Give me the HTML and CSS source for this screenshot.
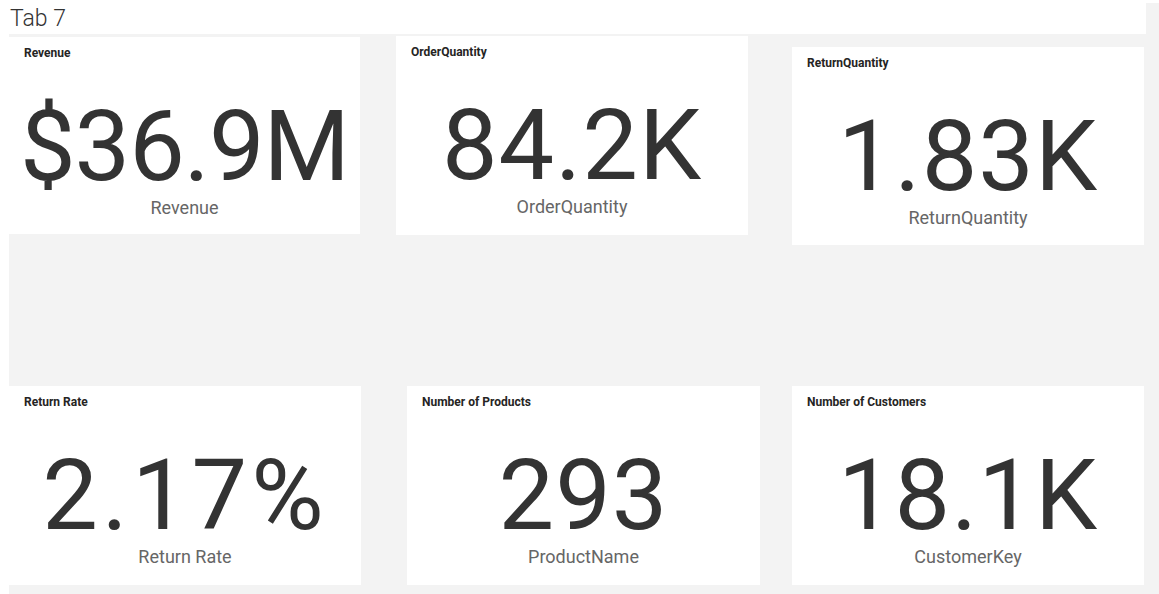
FILE: index.html
```html
<!DOCTYPE html>
<html lang="en">
<head>
<meta charset="utf-8">
<title>Tab 7</title>
<link rel="stylesheet" href="styles.css">
</head>
<body>
<div class="report">
  <header class="page-header"><h1 class="page-title">Tab 7</h1></header>
  <main class="canvas">
    <div class="row row-top">
      <section class="card card-rev">
        <h2 class="card-title">Revenue</h2>
        <div class="kpi kpi-tight">$36.9M</div>
        <div class="kpi-label">Revenue</div>
      </section>
      <section class="card card-oq">
        <h2 class="card-title">OrderQuantity</h2>
        <div class="kpi">84.2K</div>
        <div class="kpi-label">OrderQuantity</div>
      </section>
      <section class="card card-rq">
        <h2 class="card-title">ReturnQuantity</h2>
        <div class="kpi">1.83K</div>
        <div class="kpi-label">ReturnQuantity</div>
      </section>
    </div>
    <div class="row row-bottom">
      <section class="card card-rr">
        <h2 class="card-title">Return Rate</h2>
        <div class="kpi kpi-wide">2.17%</div>
        <div class="kpi-label">Return Rate</div>
      </section>
      <section class="card card-np">
        <h2 class="card-title">Number of Products</h2>
        <div class="kpi">293</div>
        <div class="kpi-label">ProductName</div>
      </section>
      <section class="card card-nc">
        <h2 class="card-title">Number of Customers</h2>
        <div class="kpi">18.1K</div>
        <div class="kpi-label">CustomerKey</div>
      </section>
    </div>
  </main>
</div>
</body>
</html>
```

FILE: styles.css
```css
* { box-sizing: border-box; }

html, body {
  margin: 0;
  padding: 0;
  background: #ffffff;
  font-family: Roboto, "Liberation Sans", sans-serif;
  overflow: hidden;
}

.report {
  margin: 3px 0 0 9px;
  width: 1150px;
  height: 591px;
  background: #f3f3f3;
  display: flex;
  flex-direction: column;
}

.page-header {
  width: 1146px;
  height: 31px;
  background: #ffffff;
  margin-left: -9px;
  padding-left: 10px;
  flex: none;
}

.page-title {
  margin: 0;
  padding-top: 2px;
  font-size: 23px;
  line-height: 28px;
  font-weight: 300;
  color: #333333;
}

.canvas {
  flex: 1;
  display: flex;
  flex-direction: column;
}

.row {
  display: flex;
  align-items: flex-start;
}

.row-top { padding-top: 2px; }
.row-bottom { margin-top: 141px; }

.card {
  background: #ffffff;
  width: 352px;
  height: 199px;
  display: flex;
  flex-direction: column;
  align-items: center;
}

.card-rev { width: 351px; height: 197px; margin-top: 1px; }
.card-oq { margin-left: 36px; }
.card-rq { margin-left: 44px; margin-top: 11px; height: 198px; }
.card-np { margin-left: 46px; width: 353px; }
.card-nc { margin-left: 32px; }

.card-title {
  align-self: stretch;
  margin: 0;
  padding: 9px 15px 0;
  height: 23px;
  font-size: 12px;
  line-height: 14px;
  font-weight: 700;
  color: #252423;
}

.kpi {
  margin-top: 38px;
  font-size: 99px;
  line-height: 97px;
  height: 97px;
  font-weight: 400;
  color: #333333;
  white-space: nowrap;
  letter-spacing: 1px;
}

.kpi-tight { letter-spacing: -1px; }
.kpi-wide { letter-spacing: 4px; }

.kpi-label {
  margin-top: 2px;
  font-size: 18px;
  line-height: 22px;
  color: #666666;
  white-space: nowrap;
}
```
